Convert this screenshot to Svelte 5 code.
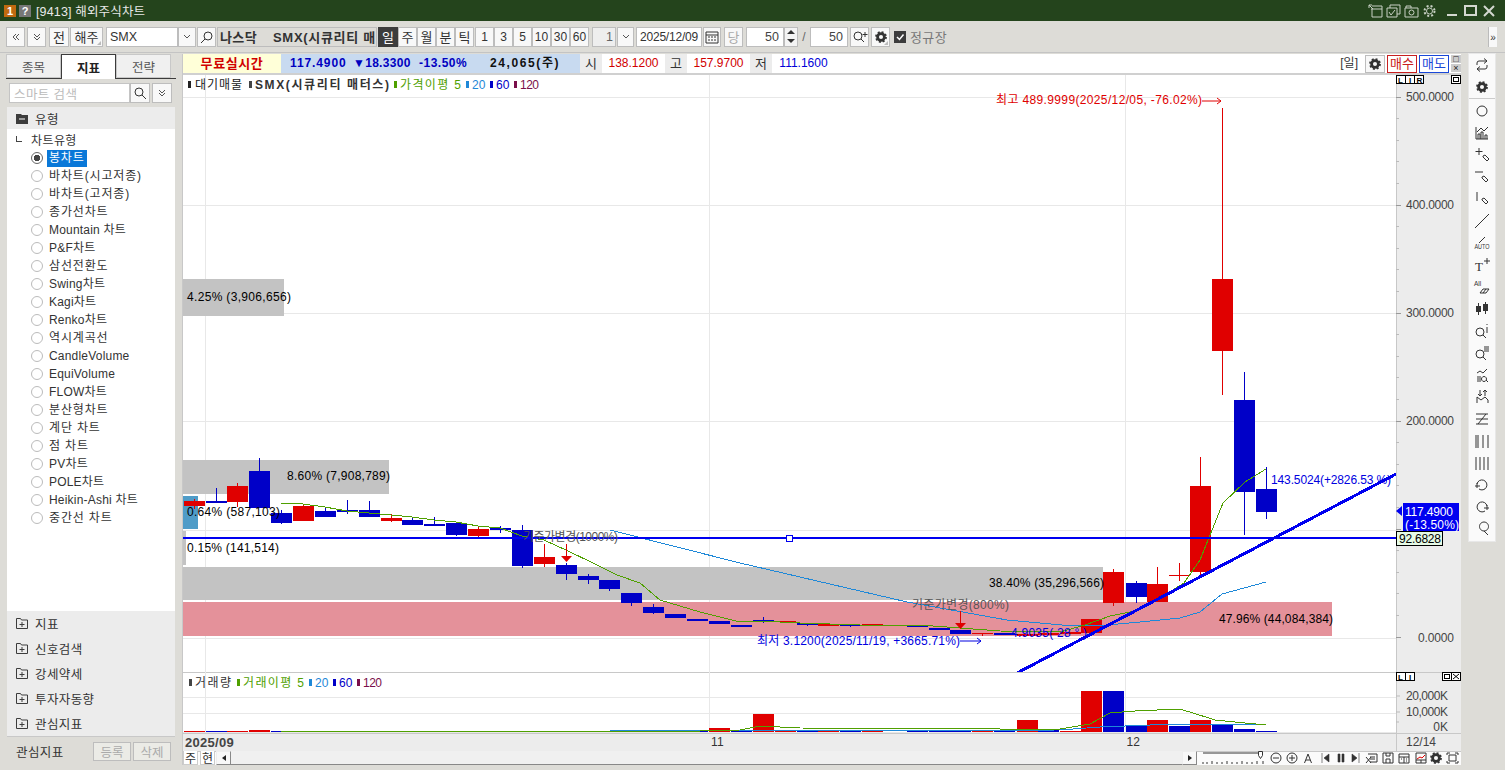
<script>
  const RED = '#e00000'
  const BLUE = '#0000c8'

  const candles = [
    [194,501,506,499,509,'r'],[216,501,503,488,503,'b'],[237,486,502,483,507,'r'],[259,471,508,458,508,'b'],
    [281,513,523,510,524,'b'],[303,506,521,504,521,'r'],[325,511,517,508,517,'b'],[347,510,512,500,514,'b'],
    [369,510,517,501,517,'b'],[391,518,521,514,522,'r'],[412,520,525,518,525,'b'],[434,524,526,517,526,'b'],
    [456,523,535,523,536,'b'],[478,529,536,526,537,'r'],[500,528,530,526,533,'b'],[522,530,566,525,568,'b'],
    [544,557,564,544,567,'r'],[566,565,574,563,580,'b'],[588,576,580,574,584,'b'],[609,580,589,580,591,'b'],
    [631,593,603,593,606,'b'],[653,607,613,604,614,'b'],[675,614,618,614,618,'b'],[697,619,621,619,621,'b'],
    [719,621,624,621,624,'b'],[741,625,627,625,627,'b'],[763,620,621,617,623,'b'],[785,621,622,621,623,'r'],
    [807,623,625,623,626,'b'],[828,624,626,624,626,'r'],[850,625,626,625,627,'b'],[872,624,626,624,626,'r'],
    [917,625,627,625,627,'b'],[939,628,630,628,630,'b'],[960,630,634,630,634,'b'],[982,633,634,633,636,'r'],
    [1004,633,635,633,635,'b'],[1027,634,636,634,636,'r'],[1048,633,635,633,635,'r'],[1070,632,634,632,634,'r'],
    [1091,619,633,619,633,'r'],[1113,572,603,569,606,'r'],[1136,583,597,581,603,'b'],[1157,584,602,567,602,'r'],
    [1179,575,575,563,581,'r'],[1200,486,572,457,575,'r'],[1222,279,351,108,395,'r'],[1244,400,492,372,535,'b'],
    [1266,489,512,467,519,'b']
  ]

  const ma5 = '281,503 303,504 325,507 347,511 369,513 391,515 412,517 434,520 456,522 478,526 500,528 522,536 544,540 566,550 597,565 617,575 640,583 660,600 700,612 740,622 760,621 800,623 860,625 920,625 960,628 1000,631 1060,632 1085,625 1110,616 1135,611 1157,600 1184,583 1200,560 1208,540 1223,503 1245,482 1266,469'
  const ma20 = '610,530 740,563 907,602 1007,620 1073,626 1107,625 1140,622 1180,618 1200,612 1222,594 1266,582'

  const gridY = [97, 205, 313, 421, 530, 638]
  const gridX = [205, 709, 1125]

  const priceLabels = [['500.0000', 97], ['400.0000', 205], ['300.0000', 313], ['200.0000', 421], ['0.0000', 638]]
  const priceTicks = Array.from({ length: 26 }, (_, i) => 97 + i * 21.6)

  // tall volume bars; every other session is a sliver in its candle's colour
  const volTall = {
    259: [730, 'r'], 719: [728, 'r'], 763: [714, 'r'], 1027: [720, 'r'], 1048: [729, 'b'], 1091: [691, 'r'],
    1113: [691, 'b'], 1136: [725, 'b'], 1157: [720, 'r'], 1179: [726, 'b'], 1200: [720, 'r'], 1222: [725, 'b'],
    1244: [729, 'b'], 1266: [731, 'b']
  }
  const volBars = candles.map(([x, , , , , c]) => {
    const hit = volTall[x]
    return hit ? [x, hit[0], hit[1]] : [x, 731, c]
  })
  const volMa5 = '281,731 700,731 740,730 760,726 800,728 1000,729 1060,729 1090,724 1110,713 1135,711 1157,710 1179,709 1190,712 1215,720 1245,723 1266,725'
  const volMa20 = '610,731 1060,730 1100,727 1150,725 1266,724'

  const chartTypes = [
    '바차트(시고저종)','바차트(고저종)','종가선차트','Mountain 차트','P&F차트','삼선전환도','Swing차트','Kagi차트',
    'Renko차트','역시계곡선','CandleVolume','EquiVolume','FLOW차트','분산형차트','계단 차트','점 차트','PV차트',
    'POLE차트','Heikin-Ashi 차트','중간선 차트'
  ]
  const isKo = (t) => /^[가-힣() ]+$/.test(t)
  const sections = ['지표', '신호검색', '강세약세', '투자자동향', '관심지표']
  const periods = ['주', '월', '분', '틱']
  const minutes = ['1', '3', '5', '10', '30', '60']

  const tools = [
    'M3 8V6a2 2 0 0 1 2-2h8M10 1.500l3 2.500-3 2.500M13 8v2a2 2 0 0 1-2 2H3M6 9.500L3 12l3 2.500',
    'G',
    'sep',
    'C',
    'M2 2v12h12M4 14V9h2v5M7 14V7h2v7M11 14v-4h2v4M3 7l4-4 3 3 4-4',
    'M5 1v7M1.500 4.500h7M9 9l2-1 4 4-2 2-4-4z',
    'M1 3h8M8 8l2-1 4 4-2 2-4-4z',
    'M3 1v9M8 8l2-1 4 4-2 2-4-4z',
    'M1 15L15 1',
    'A',
    'T',
    'E',
    'K',
    'Qi',
    'Qe',
    'M3 10h4M3 12h4M3 14h4M3 6l3-2 3 2 4-4M10 9.500a2.500 2.500 0 1 0 .01 0M12 13l2 2',
    'M3 14V8l4 3 4-3 3 3v3M6 1v6M4 5l2 2 2-2M11 7V1M9 3l2-2 2 2',
    'M2 3h12M2 8h12M2 13h12M4 13L12 3',
    'M2 2v13M4 2v13M9 2v13M14 2v13',
    'M2 2v13M6 2v13M10 2v13M14 2v13',
    'M3 7a5 5 0 1 1 2 5M1 9h5M3 6v5',
    'M13 7a5 5 0 1 0-2 5M15 9h-5M13 6v5',
    'M10 10a4.500 4.500 0 1 1 .01 0M10 10l4 4'
  ]
</script>

{#snippet gear(cx, cy, r)}
  <circle {cx} {cy} r={r * 0.62} fill="none" stroke="#333" stroke-width={r * 0.5} />
  <circle {cx} {cy} r={r * 0.9} fill="none" stroke="#333" stroke-width={r * 0.34} stroke-dasharray={(Math.PI * 1.8 * r) / 16} />
{/snippet}

{#snippet lens(x, y)}
  <circle cx={x} cy={y} r="4" fill="none" stroke="#333" />
  <path d="M{x + 3} {y + 3}l3 3" stroke="#333" fill="none" />
{/snippet}

{#snippet chevrons(d)}
  <svg width="10" height="10" viewBox="0 0 10 10"><path {d} fill="none" stroke="#555" /></svg>
{/snippet}

<div class="app">
  <header class="titlebar">
    <span class="badge orange">1</span>
    <span class="badge gray">?</span>
    <span class="title">[9413] 해외주식차트</span>
    <div class="win">
      <svg width="15" height="14" viewBox="0 0 15 14"><path d="M3 5h11v8H4V5M4 2h10v3M1 4V1h3M1 1l4 4" /></svg>
      <svg width="15" height="14" viewBox="0 0 15 14"><path d="M4 4V1h10v9h-3M1 4h10v9H1zM3 8l2 3 4-5" /></svg>
      <svg width="15" height="14" viewBox="0 0 15 14"><path d="M1 4h13v9H1zM2 4V2h5v2" /><circle cx="7.500" cy="8.500" r="2.500" /></svg>
      <svg width="15" height="14" viewBox="0 0 15 14"><circle cx="7.500" cy="7" r="3" /><circle cx="7.500" cy="7" r="5" stroke-dasharray="2 2" stroke-width="2" /></svg>
      <svg class="ctl min" width="12" height="14" viewBox="0 0 12 14"><path d="M1 11h10" stroke-width="2" /></svg>
      <svg class="ctl" width="13" height="14" viewBox="0 0 13 14"><path d="M1 2h11v9H1z" stroke-width="2" /></svg>
      <svg class="ctl" width="12" height="14" viewBox="0 0 12 14"><path d="M1 2l10 10M11 2L1 12" stroke-width="2" /></svg>
    </div>
  </header>

  <div class="toolbar">
    <button class="btn w19">{@render chevrons('M5 2L2 5l3 3M8 2L5 5l3 3')}</button>
    <button class="btn w19 ml2">{@render chevrons('M2 2l3 3 3-3M2 5l3 3 3-3')}</button>
    <button class="btn w20 ml3">전</button>
    <button class="btn w33 ml1 corner">해주</button>
    <div class="field symbol">SMX</div>
    <button class="btn w18">{@render chevrons('M2 3l3 3 3-3')}</button>
    <button class="btn w19 ml1">
      <svg width="14" height="14" viewBox="0 0 14 14"><circle cx="8" cy="6" r="4" fill="none" stroke="#333" /><path d="M5 9l-4 4" stroke="#333" /></svg>
    </button>
    <div class="name"><span class="market">나스닥</span><span>SMX(시큐리티 매</span></div>
    <button class="btn period active">일</button>
    {#each periods as p}<button class="btn period">{p}</button>{/each}
    <div class="minutes">
      {#each minutes as m}<button class="btn minute">{m}</button>{/each}
    </div>
    <div class="field spin">1</div>
    <button class="btn w17 ml1">{@render chevrons('M2 3l3 3 3-3')}</button>
    <div class="field date">2025/12/09</div>
    <button class="btn w18 ml1">
      <svg width="14" height="14" viewBox="0 0 14 14"><path d="M1 2h12v11H1zM1 5h12" fill="none" stroke="#333" /><path d="M3 7h2M6 7h2M9 7h2M3 10h2M6 10h2M9 10h2" stroke="#333" /></svg>
    </button>
    <button class="btn w19 ml3 dim">당</button>
    <div class="field count ml3">50</div>
    <div class="updown"><span class="up"></span><span class="down"></span></div>
    <span class="slash">/</span>
    <div class="field count">50</div>
    <button class="btn w19 ml2">
      <svg width="16" height="14" viewBox="0 0 16 14"><circle cx="6" cy="6" r="4" fill="none" stroke="#333" /><path d="M9 9l3 3M13 2v5M10.500 4.500h5" stroke="#333" fill="none" /></svg>
    </button>
    <button class="btn w19 ml2 corner">
      <svg width="14" height="14" viewBox="0 0 14 14">{@render gear(7, 7, 5.5)}</svg>
    </button>
    <span class="check">
      <svg width="12" height="12" viewBox="0 0 12 12"><path d="M3 6l2.500 2.500L9.500 3.500" fill="none" stroke="#fff" stroke-width="1.500" /></svg>
    </span>
    <span class="session">정규장</span>
    <button class="more">»</button>
  </div>

  <div class="body">
    <aside class="side">
      <div class="tabs">
        <div class="tab">종목</div>
        <div class="tab active">지표</div>
        <div class="tab">전략</div>
      </div>
      <div class="search">
        <div class="search-input">스마트 검색</div>
        <button class="btn search-btn">
          <svg width="14" height="14" viewBox="0 0 14 14"><circle cx="6" cy="6" r="4" fill="none" stroke="#333" /><path d="M9 9l4 4" stroke="#333" /></svg>
        </button>
        <button class="btn search-more">{@render chevrons('M2 2l3 3 3-3M2 5l3 3 3-3')}</button>
      </div>
      <div class="group open">
        <svg width="12" height="11" viewBox="0 0 12 11"><path d="M0 1h5l1 1h6v9H0z" fill="#3c3c3c" /><path d="M3 6h6" stroke="#fff" /></svg>
        <span>유형</span>
      </div>
      <div class="tree">
        <div class="tree-root"><span class="elbow"></span>차트유형</div>
        <div class="tree-item">
          <span class="radio on"></span><span class="sel">봉차트</span>
        </div>
        {#each chartTypes as t}
          <div class="tree-item" class:ko={isKo(t)}><span class="radio"></span><span>{t}</span></div>
        {/each}
      </div>
      <div class="sections">
        {#each sections as s}
          <div class="group">
            <svg width="12" height="11" viewBox="0 0 12 11"><path d="M.5 10.500V.5h4l1 1.500h6v8.500zM6 4v5M3.500 6.500h5" fill="none" stroke="#3c3c3c" /></svg>
            <span>{s}</span>
          </div>
        {/each}
      </div>
      <div class="side-foot">
        <span>관심지표</span>
        <button class="btn foot-btn">등록</button>
        <button class="btn foot-btn">삭제</button>
      </div>
    </aside>

    <main class="chart">
      <div class="quote">
        <div class="free">무료실시간</div>
        <div class="now">
          <span class="p1">117.4900</span>
          <span class="p2">▼18.3300</span>
          <span class="p3">-13.50%</span>
          <span class="p4">24,065(주)</span>
        </div>
        <div class="ohl-k">시</div><div class="ohl-v up-c">138.1200</div>
        <div class="ohl-k">고</div><div class="ohl-v up-c">157.9700</div>
        <div class="ohl-k">저</div><div class="ohl-v dn-c">111.1600</div>
        <div class="quote-right">
          <span class="cycle">[일]</span>
          <button class="btn gear-btn"><svg width="14" height="14" viewBox="0 0 14 14">{@render gear(7, 7, 5.5)}</svg></button>
          <button class="trade buy">매수</button>
          <button class="trade sell">매도</button>
          <div class="mini"><span class="mini-box">□</span><span class="mini-box">×</span></div>
        </div>
      </div>

      <div class="pane main-pane">
        <svg class="plot" width="1213" height="597" viewBox="183 75 1213 597">
          {#each gridY as y}<line x1="183" x2="1396" y1={y} y2={y} class="grid" />{/each}
          {#each gridX as x}<line x1={x} x2={x} y1="75" y2="672" class="grid" />{/each}

          <rect x="183" y="279" width="101" height="37" fill="#c3c3c3" />
          <rect x="183" y="460" width="206" height="34" fill="#c3c3c3" />
          <rect x="183" y="496" width="15" height="33" fill="#4f9cc8" />
          <rect x="183" y="531" width="3" height="34" fill="#c3c3c3" />
          <rect x="183" y="567" width="920" height="33" fill="#c3c3c3" />
          <rect x="183" y="602" width="1149" height="34" fill="#e4919a" />

          {#each candles as [x, top, bot, hi, lo, c]}
            <line x1={x + 0.5} x2={x + 0.5} y1={hi} y2={lo} stroke={c === 'r' ? RED : BLUE} class="crisp" />
            <rect x={x - 10} y={top} width="21" height={Math.max(bot - top, 1)} fill={c === 'r' ? RED : BLUE} />
          {/each}

          <polyline points={ma20} class="line" stroke="#1e88d8" />
          <polyline points={ma5} class="line" stroke="#4fa000" />

          <line x1="183" x2="1396" y1="538" y2="538" stroke="#0000f0" stroke-width="2" class="crisp" />
          <line x1="1017" y1="673" x2="1396" y2="474" stroke="#0000f0" stroke-width="3" class="crisp" />
          <rect x="786.500" y="535.500" width="6" height="6" fill="#fff" stroke="#0000f0" />

          <text x="187" y="301" class="t" textLength="104">4.25% (3,906,656)</text>
          <text x="287" y="480" class="t" textLength="103">8.60% (7,908,789)</text>
          <text x="187" y="516" class="t" textLength="93">0.64% (587,103)</text>
          <text x="187" y="552" class="t" textLength="92">0.15% (141,514)</text>
          <text x="989" y="587" class="t" textLength="115">38.40% (35,296,566)</text>
          <text x="1219" y="623" class="t" textLength="114">47.96% (44,084,384)</text>

          <text x="996" y="104" class="t" fill={RED} textLength="206">최고 489.9999(2025/12/05, -76.02%)</text>
          <path d="M1202 101h19M1217 98l4 3-4 3" fill="none" stroke={RED} />

          <text x="523" y="541" class="t faint" textLength="95">기준가변경(1000%)</text>
          <path d="M566.500 544v13" stroke={RED} />
          <path d="M561 556h11l-5.500 6z" fill={RED} />
          <text x="912" y="609" class="t faint" textLength="97">기준가변경(800%)</text>
          <path d="M960.500 611v12" stroke={RED} />
          <path d="M955 623h11l-5.500 6z" fill={RED} />

          <text x="757" y="645" class="t" fill="#0000e0" textLength="203">최저 3.1200(2025/11/19, +3665.71%)</text>
          <path d="M960 641h21M977 638l4 3-4 3" fill="none" stroke="#0000e0" />
          <text x="1011" y="637" class="t" fill="#0000e0" textLength="76">4.9035( 28 ° )</text>
          <text x="1271" y="484" class="t" fill="#0000e0" textLength="120">143.5024(+2826.53 %)</text>

          <g class="legend">
            <rect x="188" y="81" width="3" height="7" fill="#222" />
            <text x="195" y="89" class="t" fill="#222" textLength="47">대기매물</text>
            <rect x="249" y="81" width="3" height="7" fill="#444" />
            <text x="255" y="89" class="t bold" fill="#333" textLength="134">SMX(시큐리티 매터스)</text>
            <rect x="394" y="81" width="3" height="7" fill="#4fa000" />
            <text x="400" y="89" class="t" fill="#4fa000" textLength="61">가격이평 5</text>
            <rect x="466" y="81" width="3" height="7" fill="#1e88d8" />
            <text x="472" y="89" class="t" fill="#1e88d8">20</text>
            <rect x="490" y="81" width="3" height="7" fill={BLUE} />
            <text x="496" y="89" class="t" fill={BLUE}>60</text>
            <rect x="514" y="81" width="3" height="7" fill="#7a0f4a" />
            <text x="520" y="89" class="t" fill="#7a0f4a" textLength="19">120</text>
          </g>
        </svg>

        <svg class="axis" width="65" height="597" viewBox="1396 75 65 597">
          {#each priceTicks as y, i}
            <line x1="1396" x2={i % 5 === 0 ? 1401 : 1399} y1={y} y2={y} stroke={i % 5 === 0 ? '#999' : '#bbb'} class="crisp" />
          {/each}
          {#each priceLabels as [label, y]}
            <text x="1454" y={y + 4} class="t ax" text-anchor="end" textLength={label.length * 6}>{label}</text>
          {/each}

          <g class="tag">
            <rect x="1396.500" y="75.500" width="9" height="8" class="lbox" /><text x="1398" y="82.500" class="tiny">L</text>
            <rect x="1405.500" y="75.500" width="9" height="8" class="lbox" /><text x="1409" y="82.500" class="tiny">I</text>
            <rect x="1414.500" y="75.500" width="9" height="8" class="lbox" /><text x="1416.500" y="82.500" class="tiny">R</text>
            <rect x="1451.500" y="75.500" width="9" height="8" class="lbox" /><rect x="1453.500" y="77.500" width="5" height="4" class="lbox" />
          </g>

          <path d="M1396 511l6-5v10z" fill="#0000f0" />
          <rect x="1403" y="503" width="56" height="28" fill="#0000f0" />
          <text x="1405" y="516" class="t" fill="#fff" textLength="48">117.4900</text>
          <text x="1405" y="529" class="t" fill="#fff" textLength="54">(-13.50%)</text>
          <rect x="1396.500" y="531.500" width="46" height="14" fill="#e6fae6" stroke="#000" />
          <text x="1399" y="542.500" class="t" fill="#000" textLength="42">92.6828</text>
        </svg>
      </div>

      <div class="pane vol-pane">
        <svg class="plot" width="1213" height="61" viewBox="183 672 1213 61">
          <line x1="183" x2="1396" y1="697" y2="697" class="grid" />
          <line x1="183" x2="1396" y1="713" y2="713" class="grid" />
          <line x1="183" x2="1396" y1="732" y2="732" class="grid" />
          {#each gridX as x}<line x1={x} x2={x} y1="672" y2="733" class="grid" />{/each}
          {#each volBars as [x, top, c]}
            <rect x={x - 10} y={top} width="21" height={732 - top} fill={c === 'r' ? RED : BLUE} />
          {/each}
          <polyline points={volMa20} class="line" stroke="#1e88d8" />
          <polyline points={volMa5} class="line" stroke="#4fa000" />
          <rect x="189" y="679" width="3" height="7" fill="#444" />
          <text x="195" y="687" class="t" fill="#333" textLength="36">거래량</text>
          <rect x="237" y="679" width="3" height="7" fill="#4fa000" />
          <text x="243" y="687" class="t" fill="#4fa000" textLength="61">거래이평 5</text>
          <rect x="309" y="679" width="3" height="7" fill="#1e88d8" />
          <text x="315" y="687" class="t" fill="#1e88d8">20</text>
          <rect x="333" y="679" width="3" height="7" fill={BLUE} />
          <text x="339" y="687" class="t" fill={BLUE}>60</text>
          <rect x="357" y="679" width="3" height="7" fill="#7a0f4a" />
          <text x="363" y="687" class="t" fill="#7a0f4a" textLength="19">120</text>
        </svg>
        <svg class="axis" width="65" height="61" viewBox="1396 672 65 61">
          <rect x="1396.500" y="672.500" width="9" height="8" class="lbox" /><text x="1398" y="679.500" class="tiny">L</text>
          <rect x="1405.500" y="672.500" width="9" height="8" class="lbox" /><text x="1409" y="679.500" class="tiny">I</text>
          <rect x="1442.500" y="672.500" width="9" height="8" class="lbox" /><rect x="1444.500" y="674.500" width="5" height="4" class="lbox" />
          <rect x="1451.500" y="672.500" width="9" height="8" class="lbox" /><path d="M1453 674l6 5M1459 674l-6 5" stroke="#000" />
          <line x1="1396" x2="1400" y1="696" y2="696" stroke="#bbb" />
          <line x1="1396" x2="1400" y1="712" y2="712" stroke="#bbb" />
          <line x1="1396" x2="1399" y1="722" y2="722" stroke="#bbb" />
          <text x="1448" y="700" class="t ax" text-anchor="end" textLength="42">20,000K</text>
          <text x="1448" y="716" class="t ax" text-anchor="end" textLength="42">10,000K</text>
          <text x="1448" y="731" class="t ax" text-anchor="end">0K</text>
        </svg>
      </div>

      <div class="dates">
        <div class="date-track">
          <span class="d0">2025/09</span>
          <span class="d1">11</span>
          <span class="d2">12</span>
        </div>
        <div class="date-end">12/14</div>
      </div>

      <div class="scroll">
        <button class="btn sq">주</button>
        <button class="btn sq">현</button>
        <button class="btn sb"><span class="tri-l"></span></button>
        <div class="track"></div>
        <button class="btn sb"><span class="tri-r"></span></button>
        <svg class="ctrls" width="263" height="14" viewBox="0 0 263 14">
          <path d="M6 2h60M6 13v-2M10 13v-2M15 13v-3M20 13v-2M25 13v-2M30 13v-3M35 13v-2M40 13v-2M45 13v-3M50 13v-2M55 13v-2M60 13v-3M66 13v-3" stroke="#333" fill="none" />
          <path d="M61.500 .5h4v4l-2 3-2-3z" fill="#fff" stroke="#333" />
          <g fill="none" stroke="#333">
            <circle cx="79" cy="7" r="5" /><path d="M76 7h6" />
            <circle cx="95" cy="7" r="5" /><path d="M92 7h6M95 4v6" />
            <path d="M107.500 12l3.500-9 3.500 9M109 9h4" />
          </g>
          <path d="M125 2v10M132 3v8l-5-4zM141 3h2v8h-2zM145 3h2v8h-2zM155 3v8l5-4zM162 2v10" fill="#333" stroke="#333" stroke-width=".6" />
          <g fill="none" stroke="#333">
            <path d="M171 3h9v8h-7M173 6h5M173 8h5M169 6l5 6M174 6l-5 6" />
            <path d="M186 2h10v10h-10zM189 2v3h4V2M189 12V8h4v4" />
            <path d="M202 3h10v9h-10zM202 6h10M207 6v6M204 8h1M209 8h1M209 10h1" />
            <path d="M219 2h10v10h-10zM219 9h10M224 9v3" />
          </g>
          <path d="M220 8l3-2 2 1 3-3" fill="none" stroke={RED} />
          {@render gear(239, 7, 5.5)}
          <path d="M250 4V2h3M258 2h3v2M261 10v2h-3M253 12h-3v-2M252 4h7v6h-7z" fill="none" stroke="#333" />
        </svg>
      </div>
    </main>

    <nav class="tools">
      {#each tools as t}
        {#if t === 'sep'}
          <div class="tool-sep"></div>
        {:else}
          <div class="tool">
            <svg width="16" height="16" viewBox="0 0 16 16">
              {#if t === 'G'}
                {@render gear(8, 8, 5.5)}
              {:else if t === 'C'}
                <circle cx="8" cy="8" r="5" fill="none" stroke="#333" />
              {:else if t === 'A'}
                <path d="M5 8l6-6" stroke="#333" fill="none" />
                <text x="0.500" y="14" class="auto" textLength="15" lengthAdjust="spacingAndGlyphs">AUTO</text>
              {:else if t === 'T'}
                <text x="1" y="14" class="serif">T</text>
                <path d="M13 1v6M10 4h6" stroke="#333" fill="none" />
              {:else if t === 'E'}
                <text x="0" y="7" class="auto">All</text>
                <path d="M6 14l3-4h6l-3 4zM9 14l3-4" fill="none" stroke="#333" />
              {:else if t === 'K'}
                <path d="M4.500 2v12M11.500 1v12" stroke="#333" />
                <rect x="2" y="5" width="5" height="6" fill="#333" />
                <rect x="9" y="3" width="5" height="7" fill="#333" />
              {:else if t === 'Qi'}
                {@render lens(6, 9)}
                <path d="M13 1v1M13 4v6" stroke="#333" />
              {:else if t === 'Qe'}
                {@render lens(6, 9)}
                <path d="M10 2h5M10 4h5M10 6h5" stroke="#333" />
              {:else}
                <path d={t} fill="none" stroke="#333" />
              {/if}
            </svg>
          </div>
        {/if}
      {/each}
    </nav>
  </div>
</div>

<style>
  :global(body) {
    margin: 0;
    background: #dddcd7;
  }

  .app {
    width: 1505px;
    height: 770px;
    overflow: hidden;
    display: flex;
    flex-direction: column;
    background: #dddcd7;
    font-family: 'Liberation Sans', 'Noto Sans CJK KR', sans-serif;
    font-size: 12px;
    color: #222;
  }

  button {
    font: inherit;
    padding: 0;
  }

  /* ── Title bar ── */
  .titlebar {
    height: 21px;
    flex-shrink: 0;
    display: flex;
    align-items: center;
    padding-left: 4px;
    background: #24441c;
    color: #e8e8e8;
  }
  .badge {
    width: 12px;
    height: 12px;
    margin-right: 3px;
    display: flex;
    align-items: center;
    justify-content: center;
    color: #fff;
    font-weight: 700;
    font-size: 11px;
  }
  .orange { background: #c06a10; }
  .gray { background: #777; }
  .title {
    margin-left: 2px;
    font-size: 12.5px;
    letter-spacing: 0.15px;
  }
  .win {
    margin-left: auto;
    display: flex;
    align-items: center;
    gap: 3px;
    padding-right: 10px;
  }
  .win svg {
    fill: none;
    stroke: #c8d0c4;
  }
  .win .ctl {
    margin-left: 3px;
    stroke: #d4d8d0;
  }
  .win .ctl.min { margin-left: 6px; }

  /* ── Toolbar ── */
  .toolbar {
    height: 32px;
    flex-shrink: 0;
    display: flex;
    align-items: center;
    padding-left: 6px;
    box-sizing: border-box;
    border-bottom: 1px solid #c4c4c4;
    position: relative;
  }
  .btn {
    height: 20px;
    box-sizing: border-box;
    display: flex;
    align-items: center;
    justify-content: center;
    background: #f8f8f8;
    border: 1px solid #bdbdbd;
    color: #333;
    font-size: 13px;
    flex-shrink: 0;
  }
  .corner { position: relative; }
  .corner::after {
    content: '';
    position: absolute;
    right: 1px;
    bottom: 1px;
    border-left: 4px solid transparent;
    border-bottom: 4px solid #bbb;
  }
  .w17 { width: 17px; }
  .w18 { width: 18px; }
  .w19 { width: 19px; }
  .w20 { width: 20px; }
  .w33 { width: 33px; }
  .ml1 { margin-left: 1px; }
  .ml2 { margin-left: 2px; }
  .ml3 { margin-left: 3px; }
  .dim { color: #aaa; }
  .field {
    height: 20px;
    box-sizing: border-box;
    background: #fff;
    border: 1px solid #bdbdbd;
    display: flex;
    align-items: center;
    flex-shrink: 0;
    font-size: 12.5px;
    color: #333;
  }
  .symbol { width: 72px; margin-left: 3px; padding-left: 3px; }
  .name {
    width: 160px;
    height: 20px;
    margin-left: 1px;
    box-sizing: border-box;
    padding-left: 2px;
    display: flex;
    align-items: center;
    overflow: hidden;
    white-space: nowrap;
    background: #dddcd7;
    border: 1px solid #bdbdbd;
    font-weight: 700;
    font-size: 13px;
    color: #333;
    letter-spacing: 0.7px;
  }
  .market { width: 53px; flex-shrink: 0; letter-spacing: 0.4px; }
  .period { width: 19px; }
  .period.active {
    width: 20px;
    margin-left: 1px;
    background: #3c3c3c;
    border-color: #3c3c3c;
    color: #fff;
  }
  .minutes {
    display: flex;
    margin-left: 1px;
  }
  .minute { width: 19px; font-size: 12px; }
  .spin {
    width: 24px;
    margin-left: 3px;
    justify-content: flex-end;
    padding-right: 2px;
    background: #eee;
    color: #666;
  }
  .date {
    width: 66px;
    margin-left: 2px;
    justify-content: center;
    letter-spacing: -0.2px;
    font-size: 12px;
  }
  .count {
    width: 38px;
    justify-content: flex-end;
    padding-right: 4px;
    color: #444;
  }
  .updown {
    width: 14px;
    height: 20px;
    box-sizing: border-box;
    border: 1px solid #bdbdbd;
    background: #f4f4f4;
    display: flex;
    flex-direction: column;
    align-items: center;
    justify-content: space-around;
    flex-shrink: 0;
  }
  .up { border: 4px solid transparent; border-top: 0; border-bottom: 4px solid #333; }
  .down { border: 4px solid transparent; border-bottom: 0; border-top: 4px solid #333; }
  .slash { width: 12px; text-align: center; color: #666; }
  .check {
    width: 12px;
    height: 12px;
    margin-left: 4px;
    background: #3c3c3c;
    display: flex;
    flex-shrink: 0;
  }
  .session {
    margin-left: 4px;
    font-size: 13px;
    color: #777;
    letter-spacing: 0.4px;
  }
  .more {
    position: absolute;
    left: 1488px;
    top: 6px;
    width: 9px;
    height: 20px;
    border: 0;
    border-left: 1px solid #bbb;
    background: #f8f8f8;
    font-size: 10px;
    color: #333;
  }

  /* ── Body ── */
  .body {
    flex: 1;
    min-height: 0;
    display: flex;
    align-items: flex-start;
    padding: 1px 0 0 6px;
  }

  /* ── Left panel ── */
  .side {
    width: 170px;
    height: 712px;
    flex-shrink: 0;
    display: flex;
    flex-direction: column;
    background: #dddcd7;
  }
  .tabs {
    height: 24px;
    flex-shrink: 0;
    display: flex;
    border-bottom: 1px solid #3c3c3c;
    width: 170px;
    box-sizing: content-box;
  }
  .tab {
    width: 55px;
    height: 24px;
    box-sizing: border-box;
    display: flex;
    align-items: center;
    justify-content: center;
    background: #f0f0f0;
    border: 1px solid #c8c8c8;
    color: #555;
    font-size: 12.5px;
  }
  .tab.active {
    height: 25px;
    background: #fff;
    border: 1px solid #3c3c3c;
    border-bottom: 0;
    color: #222;
    font-weight: 700;
    position: relative;
  }
  .search {
    height: 28px;
    flex-shrink: 0;
    display: flex;
    align-items: center;
    padding-left: 3px;
    background: #dddcd7;
  }
  .search-input {
    width: 121px;
    height: 20px;
    box-sizing: border-box;
    padding-left: 4px;
    display: flex;
    align-items: center;
    background: #fff;
    border: 1px solid #c4c4c4;
    color: #bbb;
    font-size: 12.5px;
    letter-spacing: 0.4px;
  }
  .search-btn { width: 20px; }
  .search-more { width: 20px; margin-left: 2px; }
  .group {
    height: 25px;
    flex-shrink: 0;
    margin-left: 1px;
    margin-right: 1px;
    display: flex;
    align-items: center;
    gap: 7px;
    padding-left: 9px;
    background: #ececec;
    font-size: 12.5px;
    letter-spacing: 0.4px;
    color: #333;
  }
  .group.open { height: 22px; }
  .tree {
    height: 482px;
    flex-shrink: 0;
    margin: 0 1px;
    background: #fff;
    overflow: hidden;
    font-size: 12px;
    color: #333;
  }
  .tree-root {
    height: 20px;
    display: flex;
    align-items: center;
    padding-left: 24px;
    position: relative;
    color: #333;
    letter-spacing: 0.4px;
  }
  .elbow {
    position: absolute;
    left: 9px;
    top: 7px;
    width: 5px;
    height: 5px;
    border-left: 1px solid #444;
    border-bottom: 1px solid #444;
  }
  .tree-item {
    height: 18px;
    display: flex;
    align-items: center;
    padding-left: 24px;
    letter-spacing: 0.2px;
  }
  .tree-item span { line-height: 18px; }
  .tree-item.ko { letter-spacing: 0.85px; }
  .radio {
    width: 12px;
    height: 12px;
    margin-right: 6px;
    box-sizing: border-box;
    border: 1px solid #bbb;
    border-radius: 50%;
    flex-shrink: 0;
    background: #fff;
  }
  .radio.on {
    border-color: #666;
    background: radial-gradient(circle, #444 0 3px, #fff 3.5px);
  }
  .tree-item .sel {
    margin-left: -2px;
    padding: 0 2px;
    height: 17px;
    line-height: 17px;
    background: #0a78d8;
    color: #fff;
    letter-spacing: 0.8px;
  }
  .sections { flex-shrink: 0; }
  .side-foot {
    height: 29px;
    flex-shrink: 0;
    display: flex;
    align-items: center;
    margin: 0 1px;
    padding: 0 4px 0 9px;
    border-top: 1px solid #c8c8c8;
    box-sizing: border-box;
    font-size: 12.5px;
    letter-spacing: 0.4px;
    color: #333;
  }
  .side-foot span { margin-right: auto; }
  .foot-btn {
    width: 38px;
    height: 19px;
    margin-left: 2px;
    background: #ebebe6;
    color: #aaa;
    font-size: 12.5px;
  }

  /* ── Chart ── */
  .chart {
    width: 1279px;
    margin-left: 6px;
    flex-shrink: 0;
    display: flex;
    flex-direction: column;
    border-left: 1px solid #c8c8c8;
    box-sizing: border-box;
  }
  .quote {
    height: 21px;
    flex-shrink: 0;
    display: flex;
    align-items: stretch;
    box-sizing: border-box;
    border-bottom: 2px solid #d0d0d0;
    background: #fff;
    font-size: 12px;
    line-height: 19px;
  }
  .free {
    width: 98px;
    text-align: center;
    background: #ffffd8;
    color: #d00000;
    font-weight: 700;
    font-size: 13px;
    letter-spacing: 0.6px;
  }
  .now {
    width: 299px;
    display: flex;
    background: #c8daf0;
    font-weight: 700;
    color: #0000c0;
    letter-spacing: 0.3px;
  }
  .p1 { margin-left: 9px; width: 63px; letter-spacing: 0.9px; }
  .p2 { width: 66px; }
  .p3 { width: 71px; letter-spacing: 0.5px; }
  .p4 { color: #111; letter-spacing: 1.6px; }
  .ohl-k {
    width: 22px;
    text-align: center;
    background: #ececec;
    color: #333;
    font-size: 13px;
  }
  .ohl-v {
    width: 63px;
    text-align: center;
  }
  .up-c { color: #d00000; }
  .dn-c { color: #0000d8; }
  .quote-right {
    margin-left: auto;
    display: flex;
    align-items: center;
    gap: 2px;
  }
  .cycle { margin-right: 5px; color: #333; font-size: 12px; }
  .gear-btn { width: 20px; height: 18px; }
  .trade {
    width: 30px;
    height: 18px;
    box-sizing: border-box;
    display: flex;
    align-items: center;
    justify-content: center;
    background: #fff;
    font-size: 13px;
  }
  .buy { border: 1px solid #c82020; color: #c82020; }
  .sell { border: 1px solid #1a48d8; color: #1a48d8; }
  .mini {
    width: 10px;
    display: flex;
    flex-direction: column;
    gap: 1px;
  }
  .mini-box {
    height: 8px;
    line-height: 8px;
    text-align: center;
    font-size: 9px;
    background: #ccc;
    color: #222;
  }
  .pane {
    display: flex;
    flex-shrink: 0;
  }
  .main-pane { height: 597px; }
  .vol-pane { height: 61px; }
  .plot {
    display: block;
    background: #fff;
    flex-shrink: 0;
  }
  .axis {
    display: block;
    background: #ececec;
    flex-shrink: 0;
    box-shadow: inset 1px 0 0 #c8c8c8;
  }
  .vol-pane .plot { box-shadow: inset 0 1px 0 #c8c8c8; }
  .vol-pane .axis { box-shadow: inset 1px 1px 0 #c8c8c8; }
  .grid { stroke: #e8e8e8; stroke-width: 1; shape-rendering: crispEdges; }
  .crisp { shape-rendering: crispEdges; }
  .line { fill: none; stroke-width: 1; shape-rendering: crispEdges; }
  .t {
    font-family: 'Liberation Sans', 'Noto Sans CJK KR', sans-serif;
    font-size: 12px;
  }
  .faint { fill: #555; }
  .bold { font-weight: 700; }
  .ax { fill: #444; }
  .lbox { fill: #fff; stroke: #000; }
  .tiny {
    font-family: 'Liberation Sans', sans-serif;
    font-size: 8px;
    font-weight: 700;
    fill: #000;
  }
  .dates {
    height: 18px;
    flex-shrink: 0;
    display: flex;
    background: #ececec;
    box-shadow: inset 0 1px 0 #c8c8c8;
  }
  .date-track {
    width: 1213px;
    display: flex;
    align-items: center;
    font-size: 12px;
    color: #333;
  }
  .d0 { margin-left: 2px; font-weight: 700; font-size: 13px; color: #444; letter-spacing: 0.3px; }
  .d1 { margin-left: 477px; }
  .d2 { margin-left: 403px; }
  .date-end {
    flex: 1;
    padding-left: 10px;
    line-height: 18px;
    color: #444;
    box-shadow: inset 1px 0 0 #c8c8c8;
  }
  .scroll {
    height: 14px;
    flex-shrink: 0;
    display: flex;
    align-items: center;
    box-shadow: inset 0 1px 0 #c8c8c8;
    background: #fbfbfb;
  }
  .sq {
    width: 15px;
    height: 14px;
    margin-right: 2px;
    font-size: 12px;
    background: #fff;
    border: 1px solid #ccc;
    border-top: 0;
  }
  .sq + .sq { margin-right: 1px; }
  .sb {
    width: 15px;
    height: 14px;
    border: 1px solid #888;
    border-color: #eee #888 #888 #eee;
    background: #f8f8f8;
  }
  .tri-l { border: 3px solid transparent; border-left: 0; border-right: 4px solid #222; }
  .tri-r { border: 3px solid transparent; border-right: 0; border-left: 4px solid #222; }
  .track {
    width: 951px;
    height: 14px;
    box-sizing: border-box;
    background: #f0f0f0;
    border-bottom: 1px solid #888;
  }
  .ctrls { flex-shrink: 0; display: block; }

  /* ── Right tools ── */
  .tools {
    width: 26px;
    margin-left: 8px;
    flex-shrink: 0;
    height: 487px;
    display: flex;
    flex-direction: column;
    align-items: center;
    background: #fafafa;
    box-shadow: 0 0 0 1px #e8e8e8;
  }
  .tool {
    height: 22px;
    width: 100%;
    flex-shrink: 0;
    display: flex;
    align-items: center;
    justify-content: center;
  }
  .tool svg { display: block; overflow: visible; }
  .tool-sep {
    width: 100%;
    height: 1px;
    margin: 0 0 1px;
    background: #ccc;
    flex-shrink: 0;
  }
  .auto {
    font-family: 'Liberation Sans', sans-serif;
    font-size: 6.500px;
    fill: #333;
  }
  .serif {
    font-family: 'Liberation Serif', serif;
    font-size: 13px;
    fill: #333;
  }
</style>
